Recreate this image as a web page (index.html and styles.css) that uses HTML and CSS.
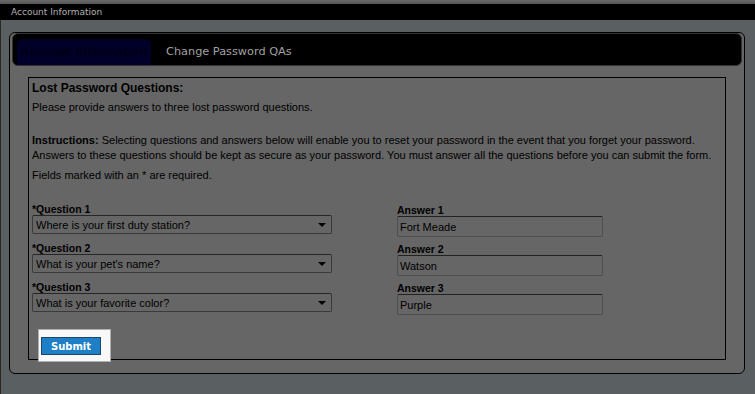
FILE: index.html
```html
<!DOCTYPE html>
<html>
<head>
<meta charset="utf-8">
<link rel="stylesheet" href="styles.css">
</head>
<body>
<div class="topstrip"></div>
<div class="titlebar">Account Information</div>
<div class="main">
  <div class="panel">
    <div class="tabbar">
      <div class="tab active">Account Information</div>
      <div class="tab">Change Password QAs</div>
    </div>
    <div class="box">
      <div class="title">Lost Password Questions:</div>
      <p class="p1">Please provide answers to three lost password questions.</p>
      <p class="p2"><b>Instructions:</b> Selecting questions and answers below will enable you to reset your password in the event that you forget your password.<br>Answers to these questions should be kept as secure as your password. You must answer all the questions before you can submit the form.</p>
      <p class="p3">Fields marked with an * are required.</p>
      <div class="form">
        <div class="qcell">
          <label class="lbl">*Question 1</label>
          <div class="selwrap"><select class="sel"><option>Where is your first duty station?</option></select></div>
        </div>
        <div class="acell">
          <label class="lbl">Answer 1</label>
          <input class="inp" type="text" value="Fort Meade">
        </div>
        <div class="qcell">
          <label class="lbl">*Question 2</label>
          <div class="selwrap"><select class="sel"><option>What is your pet's name?</option></select></div>
        </div>
        <div class="acell">
          <label class="lbl">Answer 2</label>
          <input class="inp" type="text" value="Watson">
        </div>
        <div class="qcell">
          <label class="lbl">*Question 3</label>
          <div class="selwrap"><select class="sel"><option>What is your favorite color?</option></select></div>
        </div>
        <div class="acell">
          <label class="lbl">Answer 3</label>
          <input class="inp" type="text" value="Purple">
        </div>
      </div>
      <div class="btnbox"><button class="btn">Submit</button></div>
    </div>
  </div>
</div>
</body>
</html>
```
FILE: styles.css
```css
html, body {
  margin: 0;
  padding: 0;
}
body {
  background: #5a5f61;
  width: 755px;
  height: 394px;
  overflow: hidden;
  font-family: "Liberation Sans", Arial, sans-serif;
}
.topstrip {
  height: 4px;
  background: linear-gradient(#6a6a6a, #555);
}
.titlebar {
  height: 16px;
  background: #000;
  color: #b0b0b0;
  font-family: "DejaVu Sans", Verdana, sans-serif;
  font-size: 9px;
  line-height: 16px;
  padding-left: 11px;
}
.main {
  border-left: 1px solid #2a2622;
  padding: 12px 0 0 8px;
  height: 374px;
  box-sizing: border-box;
}
.panel {
  width: 730px;
  background: #666;
  border: 1px solid #000;
  border-radius: 6px;
  padding: 0 2px 13px 2px;
}
.tabbar {
  height: 31px;
  background: #000;
  border: 1px solid #333;
  border-radius: 6px;
  display: flex;
  align-items: flex-end;
}
.tab {
  font-family: "DejaVu Sans", Verdana, sans-serif;
  font-size: 11.3px;
  color: #a0a0a0;
  height: 26px;
  line-height: 26px;
  padding: 0 0 0 15px;
}
.tab.active {
  margin-left: 4px;
  width: 134px;
  padding: 0;
  box-sizing: border-box;
  background: #000028;
  color: #000014;
  font-family: "Liberation Sans", Arial, sans-serif;
  font-weight: bold;
  font-size: 13px;
  text-align: center;
  border-radius: 6px 6px 0 0;
}
.box {
  margin: 11px 16px 0 16px;
  border: 1px solid #000;
  background: #666;
  padding: 3px 3px 0 3px;
  color: #000;
  font-size: 11px;
}
.title {
  font-weight: bold;
  font-size: 12px;
  line-height: 15px;
}
p {
  margin: 0;
  line-height: 15px;
  white-space: nowrap;
}
.p1 {
  margin-top: 4px;
}
.p2 {
  margin-top: 18px;
}
.p3 {
  margin-top: 5px;
}
.form {
  margin-top: 20px;
  display: grid;
  grid-template-columns: 365px 206px;
  row-gap: 5px;
}
.qcell, .acell {
  display: flex;
  flex-direction: column;
}
.acell {
  padding-top: 1px;
}
.lbl {
  font-size: 10.5px;
  font-weight: bold;
  line-height: 12px;
}
.selwrap {
  position: relative;
  width: 300px;
}
.selwrap::after {
  content: "";
  position: absolute;
  right: 6px;
  top: 8px;
  border-left: 4px solid transparent;
  border-right: 4px solid transparent;
  border-top: 4px solid #000;
}
.sel {
  -webkit-appearance: none;
  appearance: none;
  width: 300px;
  height: 19px;
  box-sizing: border-box;
  background: #666;
  border: 1px solid #3a3a3a;
  border-top-color: #262626;
  border-radius: 2px;
  font-family: "Liberation Sans", Arial, sans-serif;
  font-size: 11px;
  color: #000;
  padding: 0 0 0 3px;
  margin: 0;
}
.inp {
  width: 206px;
  height: 21px;
  box-sizing: border-box;
  background: #666;
  border: 1px solid #4c4f52;
  border-top-color: #222;
  border-radius: 2px;
  font-family: "Liberation Sans", Arial, sans-serif;
  font-size: 11px;
  color: #000;
  padding: 0 2px;
  margin: 0;
  outline: none;
}
.btnbox {
  position: relative;
  z-index: 1;
  margin: 14px 0 -3px 6px;
  width: 69px;
  background: #f8f8f8;
  border: 1px solid #b0b0b0;
  padding: 7px 0 6px 2px;
  box-sizing: content-box;
  height: 18px;
}
.btn {
  display: block;
  width: 60px;
  height: 18px;
  box-sizing: border-box;
  background: #1e7fc6;
  border: 1px solid #1b4868;
  color: #fff;
  font-family: "DejaVu Sans", Verdana, sans-serif;
  font-weight: bold;
  font-size: 10px;
  padding: 0;
  margin: 0;
}
```
